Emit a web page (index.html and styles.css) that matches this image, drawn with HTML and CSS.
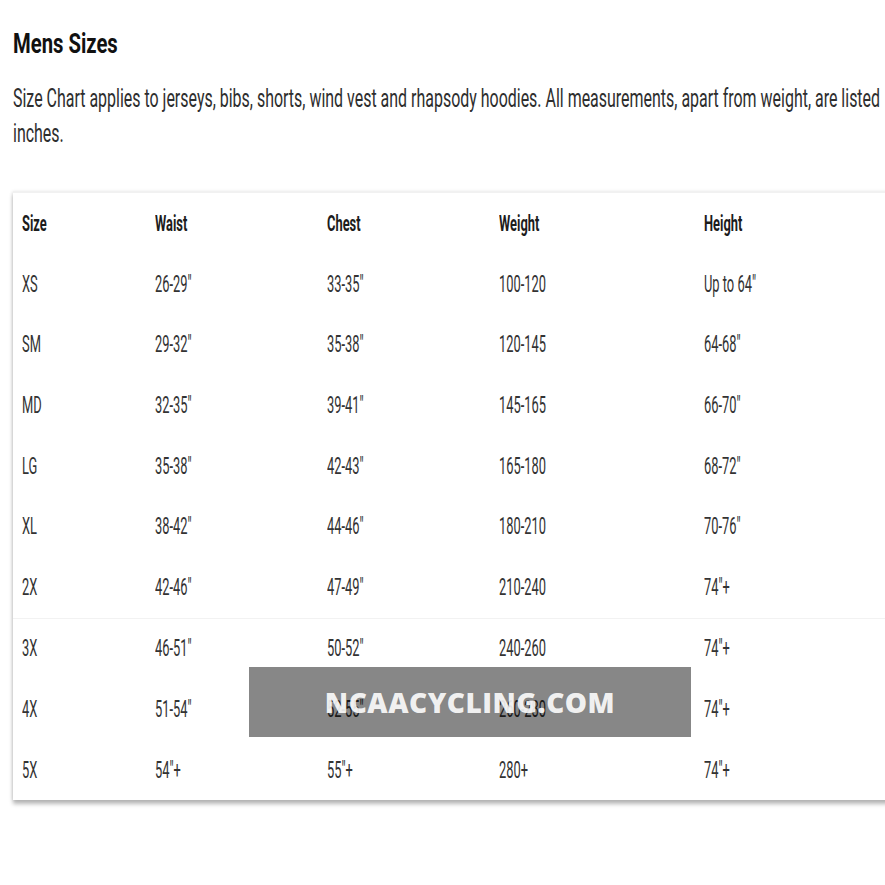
FILE: index.html
```html
<!DOCTYPE html>
<html lang="en">
<head>
<meta charset="utf-8">
<title>Mens Sizes</title>
<link rel="stylesheet" href="styles.css">
</head>
<body>
<div class="page">
  <h1 class="title"><span class="sq">Mens Sizes</span></h1>
  <p class="intro">
    <span class="line">Size Chart applies to jerseys, bibs, shorts, wind vest and rhapsody hoodies. All measurements, apart from weight, are listed</span>
    <span class="line">inches.</span>
  </p>
  <div class="card">
    <table class="chart">
      <colgroup>
        <col class="c1"><col class="c2"><col class="c3"><col class="c4"><col class="c5">
      </colgroup>
      <thead>
        <tr><th><span class="sq">Size</span></th><th><span class="sq">Waist</span></th><th><span class="sq">Chest</span></th><th><span class="sq">Weight</span></th><th><span class="sq">Height</span></th></tr>
      </thead>
      <tbody>
        <tr><td><span class="sq">XS</span></td><td><span class="sq">26-29"</span></td><td><span class="sq">33-35"</span></td><td><span class="sq">100-120</span></td><td><span class="sq">Up to 64"</span></td></tr>
        <tr><td><span class="sq">SM</span></td><td><span class="sq">29-32"</span></td><td><span class="sq">35-38"</span></td><td><span class="sq">120-145</span></td><td><span class="sq">64-68"</span></td></tr>
        <tr><td><span class="sq">MD</span></td><td><span class="sq">32-35"</span></td><td><span class="sq">39-41"</span></td><td><span class="sq">145-165</span></td><td><span class="sq">66-70"</span></td></tr>
        <tr><td><span class="sq">LG</span></td><td><span class="sq">35-38"</span></td><td><span class="sq">42-43"</span></td><td><span class="sq">165-180</span></td><td><span class="sq">68-72"</span></td></tr>
        <tr><td><span class="sq">XL</span></td><td><span class="sq">38-42"</span></td><td><span class="sq">44-46"</span></td><td><span class="sq">180-210</span></td><td><span class="sq">70-76"</span></td></tr>
        <tr><td><span class="sq">2X</span></td><td><span class="sq">42-46"</span></td><td><span class="sq">47-49"</span></td><td><span class="sq">210-240</span></td><td><span class="sq">74"+</span></td></tr>
        <tr class="split"><td><span class="sq">3X</span></td><td><span class="sq">46-51"</span></td><td><span class="sq">50-52"</span></td><td><span class="sq">240-260</span></td><td><span class="sq">74"+</span></td></tr>
        <tr><td><span class="sq">4X</span></td><td><span class="sq">51-54"</span></td><td><span class="sq">52-55"</span></td><td><span class="sq">260-280</span></td><td><span class="sq">74"+</span></td></tr>
        <tr><td><span class="sq">5X</span></td><td><span class="sq">54"+</span></td><td><span class="sq">55"+</span></td><td><span class="sq">280+</span></td><td><span class="sq">74"+</span></td></tr>
      </tbody>
    </table>
  </div>
</div>
<div class="watermark">NCAACYCLING.COM</div>
</body>
</html>
```

FILE: styles.css
```css
html, body {
  margin: 0;
  padding: 0;
  background: #ffffff;
  overflow: hidden;
  width: 885px;
  height: 885px;
}

body {
  position: relative;
}

.page {
  padding-left: 13px;
  font-family: Roboto, "Liberation Sans", sans-serif;
  color: #2b2b2b;
}

.sq {
  display: inline-block;
  transform-origin: 0 50%;
  white-space: nowrap;
}

.title {
  margin: 0;
  padding-top: 26px;
  font-size: 27px;
  line-height: 36px;
  font-weight: 700;
  color: #111111;
}

.title .sq {
  transform: scaleX(0.75);
}

.intro {
  margin: 19px 0 0;
  font-size: 25.5px;
  line-height: 35px;
  color: #2e2e2e;
}

.intro .line {
  display: block;
  white-space: nowrap;
  transform: scaleX(0.626);
  transform-origin: 0 50%;
}

.card {
  margin-top: 40px;
  width: 900px;
  background: #ffffff;
  border-top: 2px solid #f1f1f1;
  box-shadow: 0 4px 4px rgba(0, 0, 0, 0.28), -1px 0 3px rgba(0, 0, 0, 0.08);
}

.chart {
  border-collapse: collapse;
  width: 100%;
  table-layout: fixed;
}

.c1 { width: 133px; }
.c2 { width: 172px; }
.c3 { width: 172px; }
.c4 { width: 205px; }

.chart th,
.chart td {
  text-align: left;
  padding: 0 0 0 9px;
  vertical-align: middle;
  white-space: nowrap;
  overflow: visible;
}

.chart th {
  height: 61px;
  font-size: 22px;
  font-weight: 700;
  color: #1c1c1c;
}

.chart th .sq {
  transform: scaleX(0.585);
}

.chart td {
  height: 60.6px;
  font-size: 23px;
  font-weight: 400;
  color: #333333;
}

.chart td .sq {
  transform: scaleX(0.56);
}

.chart tr.split td {
  border-top: 1px solid #f2f2f2;
}

.watermark {
  position: absolute;
  left: 249px;
  top: 667px;
  width: 442px;
  height: 70px;
  background: rgba(0, 0, 0, 0.47);
  color: rgba(255, 255, 255, 0.9);
  font-family: "Open Sans", "Liberation Sans", sans-serif;
  font-weight: 800;
  font-size: 28px;
  line-height: 70px;
  text-align: center;
  letter-spacing: 0.5px;
}
```
